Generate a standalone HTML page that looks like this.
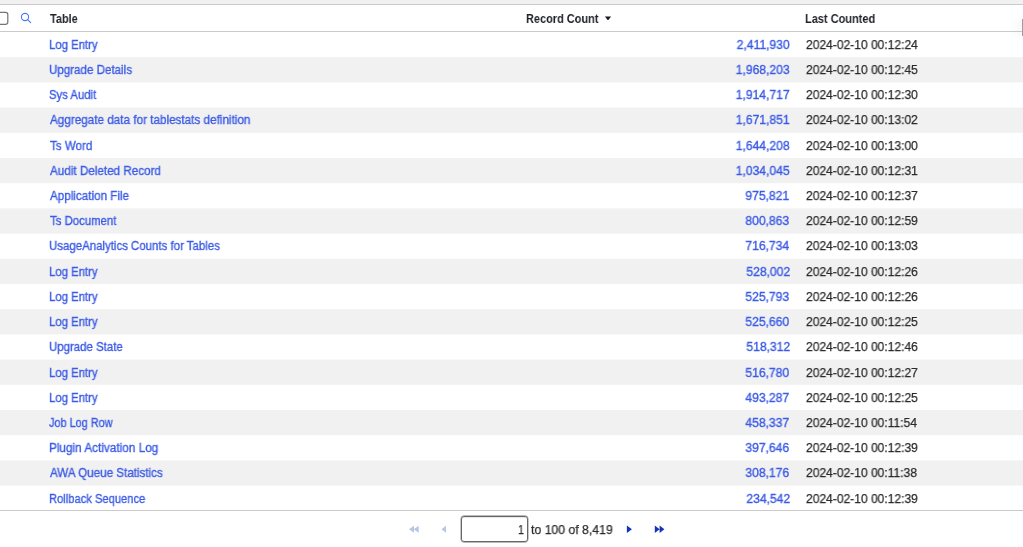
<!DOCTYPE html>
<html><head><meta charset="utf-8"><style>
html,body{margin:0;padding:0;}
body{width:1023px;height:547px;overflow:hidden;position:relative;background:#fff;font-family:"Liberation Sans",sans-serif;}
.t{position:absolute;white-space:nowrap;will-change:transform;font-size:12.5px;transform-origin:left center;}
.lnk{color:#3b5be6;-webkit-text-stroke:0.35px #3b5be6;}
.dt{color:#2b2b2b;-webkit-text-stroke:0.25px #2b2b2b;}
.hd{color:#1e2126;font-weight:bold;}
.row{position:absolute;left:0;width:1023px;}
.band{position:absolute;left:0;top:0;width:1023px;height:4px;background:#f1f1f1;}
.ln{position:absolute;left:0;width:1023px;height:1px;background:#cacaca;}
</style></head><body>
<div class="band"></div>
<div class="ln" style="top:4px"></div>
<div class="ln" style="top:31px"></div>
<svg style="position:absolute;left:0;top:0" width="1023" height="547" viewBox="0 0 1023 547"><rect x="0" y="57.20" width="1023" height="25.2" fill="#f1f1f1"/><rect x="0" y="107.60" width="1023" height="25.2" fill="#f1f1f1"/><rect x="0" y="158.00" width="1023" height="25.2" fill="#f1f1f1"/><rect x="0" y="208.40" width="1023" height="25.2" fill="#f1f1f1"/><rect x="0" y="258.80" width="1023" height="25.2" fill="#f1f1f1"/><rect x="0" y="309.20" width="1023" height="25.2" fill="#f1f1f1"/><rect x="0" y="359.60" width="1023" height="25.2" fill="#f1f1f1"/><rect x="0" y="410.00" width="1023" height="25.2" fill="#f1f1f1"/><rect x="0" y="460.40" width="1023" height="25.2" fill="#f1f1f1"/></svg>
<div class="ln" style="top:510px"></div>
<svg style="position:absolute;left:0;top:8px" width="12" height="20" viewBox="0 8 12 20"><rect x="-6" y="12.4" width="13.8" height="11.9" rx="2.2" fill="none" stroke="#767676" stroke-width="1.25"/></svg>
<svg style="position:absolute;left:18px;top:10px" width="16" height="16" viewBox="18 10 16 16"><circle cx="25" cy="17" r="3.6" fill="none" stroke="#4a7cf8" stroke-width="1.15"/><line x1="27.6" y1="19.6" x2="30.6" y2="22.6" stroke="#4a7cf8" stroke-width="1.2" stroke-linecap="round"/></svg>
<div class="t hd" style="left:49.93px;top:5.80px;height:26px;line-height:26px;transform:scaleX(0.8741)">Table</div>
<div class="t hd" style="left:526.17px;top:5.80px;height:26px;line-height:26px;transform:scaleX(0.8767)">Record Count</div>
<svg style="display:block;position:absolute;left:604px;top:15px" width="8" height="6" viewBox="0 0 8 6"><path d="M0.9 1.4 L7.1 1.4 L4.4 5.1 L3.6 5.1 Z" fill="#1a1d22"/></svg>
<div class="t hd" style="left:805.47px;top:5.80px;height:26px;line-height:26px;transform:scaleX(0.8793)">Last Counted</div>
<div class="t lnk" style="left:48.86px;top:33.00px;height:25px;line-height:25px;transform:scaleX(0.9083)">Log Entry</div><div class="t lnk" style="right:233.65px;top:33.00px;height:25px;line-height:25px;transform:scaleX(0.9698);transform-origin:right center">2,411,930</div><div class="t dt" style="left:805.52px;top:33.00px;height:25px;line-height:25px;transform:scaleX(0.9638)">2024-02-10 00:12:24</div><div class="t lnk" style="left:48.72px;top:58.00px;height:25px;line-height:25px;transform:scaleX(0.9257)">Upgrade Details</div><div class="t lnk" style="right:233.54px;top:58.00px;height:25px;line-height:25px;transform:scaleX(0.9698);transform-origin:right center">1,968,203</div><div class="t dt" style="left:805.53px;top:58.00px;height:25px;line-height:25px;transform:scaleX(0.9638)">2024-02-10 00:12:45</div><div class="t lnk" style="left:48.57px;top:83.00px;height:25px;line-height:25px;transform:scaleX(0.9063)">Sys Audit</div><div class="t lnk" style="right:233.83px;top:83.00px;height:25px;line-height:25px;transform:scaleX(0.9698);transform-origin:right center">1,914,717</div><div class="t dt" style="left:805.52px;top:83.00px;height:25px;line-height:25px;transform:scaleX(0.9638)">2024-02-10 00:12:30</div><div class="t lnk" style="left:49.56px;top:108.00px;height:25px;line-height:25px;transform:scaleX(0.9361)">Aggregate data for tablestats definition</div><div class="t lnk" style="right:233.59px;top:108.00px;height:25px;line-height:25px;transform:scaleX(0.9698);transform-origin:right center">1,671,851</div><div class="t dt" style="left:805.53px;top:108.00px;height:25px;line-height:25px;transform:scaleX(0.9638)">2024-02-10 00:13:02</div><div class="t lnk" style="left:49.56px;top:134.00px;height:25px;line-height:25px;transform:scaleX(0.9276)">Ts Word</div><div class="t lnk" style="right:233.59px;top:134.00px;height:25px;line-height:25px;transform:scaleX(0.9698);transform-origin:right center">1,644,208</div><div class="t dt" style="left:805.52px;top:134.00px;height:25px;line-height:25px;transform:scaleX(0.9638)">2024-02-10 00:13:00</div><div class="t lnk" style="left:49.56px;top:159.00px;height:25px;line-height:25px;transform:scaleX(0.9341)">Audit Deleted Record</div><div class="t lnk" style="right:233.88px;top:159.00px;height:25px;line-height:25px;transform:scaleX(0.9698);transform-origin:right center">1,034,045</div><div class="t dt" style="left:805.53px;top:159.00px;height:25px;line-height:25px;transform:scaleX(0.9638)">2024-02-10 00:12:31</div><div class="t lnk" style="left:49.58px;top:184.00px;height:25px;line-height:25px;transform:scaleX(0.9330)">Application File</div><div class="t lnk" style="right:233.38px;top:184.00px;height:25px;line-height:25px;transform:scaleX(0.9698);transform-origin:right center">975,821</div><div class="t dt" style="left:805.52px;top:184.00px;height:25px;line-height:25px;transform:scaleX(0.9638)">2024-02-10 00:12:37</div><div class="t lnk" style="left:49.55px;top:209.00px;height:25px;line-height:25px;transform:scaleX(0.9097)">Ts Document</div><div class="t lnk" style="right:233.46px;top:209.00px;height:25px;line-height:25px;transform:scaleX(0.9698);transform-origin:right center">800,863</div><div class="t dt" style="left:805.53px;top:209.00px;height:25px;line-height:25px;transform:scaleX(0.9638)">2024-02-10 00:12:59</div><div class="t lnk" style="left:48.59px;top:234.00px;height:25px;line-height:25px;transform:scaleX(0.9153)">UsageAnalytics Counts for Tables</div><div class="t lnk" style="right:233.46px;top:234.00px;height:25px;line-height:25px;transform:scaleX(0.9698);transform-origin:right center">716,734</div><div class="t dt" style="left:805.52px;top:234.00px;height:25px;line-height:25px;transform:scaleX(0.9638)">2024-02-10 00:13:03</div><div class="t lnk" style="left:48.86px;top:260.00px;height:25px;line-height:25px;transform:scaleX(0.9083)">Log Entry</div><div class="t lnk" style="right:233.31px;top:260.00px;height:25px;line-height:25px;transform:scaleX(0.9698);transform-origin:right center">528,002</div><div class="t dt" style="left:805.53px;top:260.00px;height:25px;line-height:25px;transform:scaleX(0.9638)">2024-02-10 00:12:26</div><div class="t lnk" style="left:48.86px;top:285.00px;height:25px;line-height:25px;transform:scaleX(0.9083)">Log Entry</div><div class="t lnk" style="right:233.46px;top:285.00px;height:25px;line-height:25px;transform:scaleX(0.9698);transform-origin:right center">525,793</div><div class="t dt" style="left:805.52px;top:285.00px;height:25px;line-height:25px;transform:scaleX(0.9638)">2024-02-10 00:12:26</div><div class="t lnk" style="left:48.86px;top:310.00px;height:25px;line-height:25px;transform:scaleX(0.9083)">Log Entry</div><div class="t lnk" style="right:233.75px;top:310.00px;height:25px;line-height:25px;transform:scaleX(0.9698);transform-origin:right center">525,660</div><div class="t dt" style="left:805.53px;top:310.00px;height:25px;line-height:25px;transform:scaleX(0.9638)">2024-02-10 00:12:25</div><div class="t lnk" style="left:48.59px;top:335.00px;height:25px;line-height:25px;transform:scaleX(0.9142)">Upgrade State</div><div class="t lnk" style="right:233.32px;top:335.00px;height:25px;line-height:25px;transform:scaleX(0.9698);transform-origin:right center">518,312</div><div class="t dt" style="left:805.52px;top:335.00px;height:25px;line-height:25px;transform:scaleX(0.9638)">2024-02-10 00:12:46</div><div class="t lnk" style="left:48.86px;top:361.00px;height:25px;line-height:25px;transform:scaleX(0.9083)">Log Entry</div><div class="t lnk" style="right:233.75px;top:361.00px;height:25px;line-height:25px;transform:scaleX(0.9698);transform-origin:right center">516,780</div><div class="t dt" style="left:805.53px;top:361.00px;height:25px;line-height:25px;transform:scaleX(0.9638)">2024-02-10 00:12:27</div><div class="t lnk" style="left:48.86px;top:386.00px;height:25px;line-height:25px;transform:scaleX(0.9083)">Log Entry</div><div class="t lnk" style="right:233.71px;top:386.00px;height:25px;line-height:25px;transform:scaleX(0.9698);transform-origin:right center">493,287</div><div class="t dt" style="left:805.52px;top:386.00px;height:25px;line-height:25px;transform:scaleX(0.9638)">2024-02-10 00:12:25</div><div class="t lnk" style="left:48.86px;top:411.00px;height:25px;line-height:25px;transform:scaleX(0.8699)">Job Log Row</div><div class="t lnk" style="right:233.71px;top:411.00px;height:25px;line-height:25px;transform:scaleX(0.9698);transform-origin:right center">458,337</div><div class="t dt" style="left:805.53px;top:411.00px;height:25px;line-height:25px;transform:scaleX(0.9638)">2024-02-10 00:11:54</div><div class="t lnk" style="left:48.88px;top:436.00px;height:25px;line-height:25px;transform:scaleX(0.9419)">Plugin Activation Log</div><div class="t lnk" style="right:233.33px;top:436.00px;height:25px;line-height:25px;transform:scaleX(0.9698);transform-origin:right center">397,646</div><div class="t dt" style="left:805.52px;top:436.00px;height:25px;line-height:25px;transform:scaleX(0.9638)">2024-02-10 00:12:39</div><div class="t lnk" style="left:49.56px;top:461.00px;height:25px;line-height:25px;transform:scaleX(0.9296)">AWA Queue Statistics</div><div class="t lnk" style="right:233.34px;top:461.00px;height:25px;line-height:25px;transform:scaleX(0.9698);transform-origin:right center">308,176</div><div class="t dt" style="left:805.53px;top:461.00px;height:25px;line-height:25px;transform:scaleX(0.9638)">2024-02-10 00:11:38</div><div class="t lnk" style="left:48.88px;top:487.00px;height:25px;line-height:25px;transform:scaleX(0.8937)">Rollback Sequence</div><div class="t lnk" style="right:233.32px;top:487.00px;height:25px;line-height:25px;transform:scaleX(0.9698);transform-origin:right center">234,542</div><div class="t dt" style="left:805.52px;top:487.00px;height:25px;line-height:25px;transform:scaleX(0.9638)">2024-02-10 00:12:39</div>
<div style="position:absolute;left:1022px;top:19px;width:3px;height:17px;background:#9c9c9c;box-shadow:-3px 0 8px rgba(0,0,0,0.10);"></div>
<svg style="position:absolute;left:400px;top:515px" width="60" height="25" viewBox="400 515 60 25"><path d="M414 525.8 L414 532.8 L409 529.3 Z M418.7 525.8 L418.7 532.8 L413.7 529.3 Z" fill="#b9c4e9"/><path d="M446 525.8 L446 532.8 L441.5 529.3 Z" fill="#b9c4e9"/></svg>
<div style="position:absolute;left:461px;top:516px;width:65px;height:24.4px;border:1px solid #666;border-radius:3px;box-shadow:0 0 0 0.4px #777, inset 0 2px 1px -1px rgba(0,0,0,0.1);"></div>
<div class="t dt" style="left:517.64px;top:516.80px;height:26px;line-height:26px;transform:scaleX(0.8479)">1</div>
<div class="t dt" style="left:531.49px;top:516.80px;height:26px;line-height:26px;transform:scaleX(0.9800)">to 100 of 8,419</div>
<svg style="position:absolute;left:620px;top:515px" width="50" height="25" viewBox="620 515 50 25"><path d="M626.9 525.6 L631.9 529.2 L626.9 532.9 Z" fill="#1434b8"/><path d="M654.8 525.6 L659.6 529.2 L654.8 532.9 Z M659.6 525.6 L664.4 529.2 L659.6 532.9 Z" fill="#1434b8"/></svg>
</body></html>
